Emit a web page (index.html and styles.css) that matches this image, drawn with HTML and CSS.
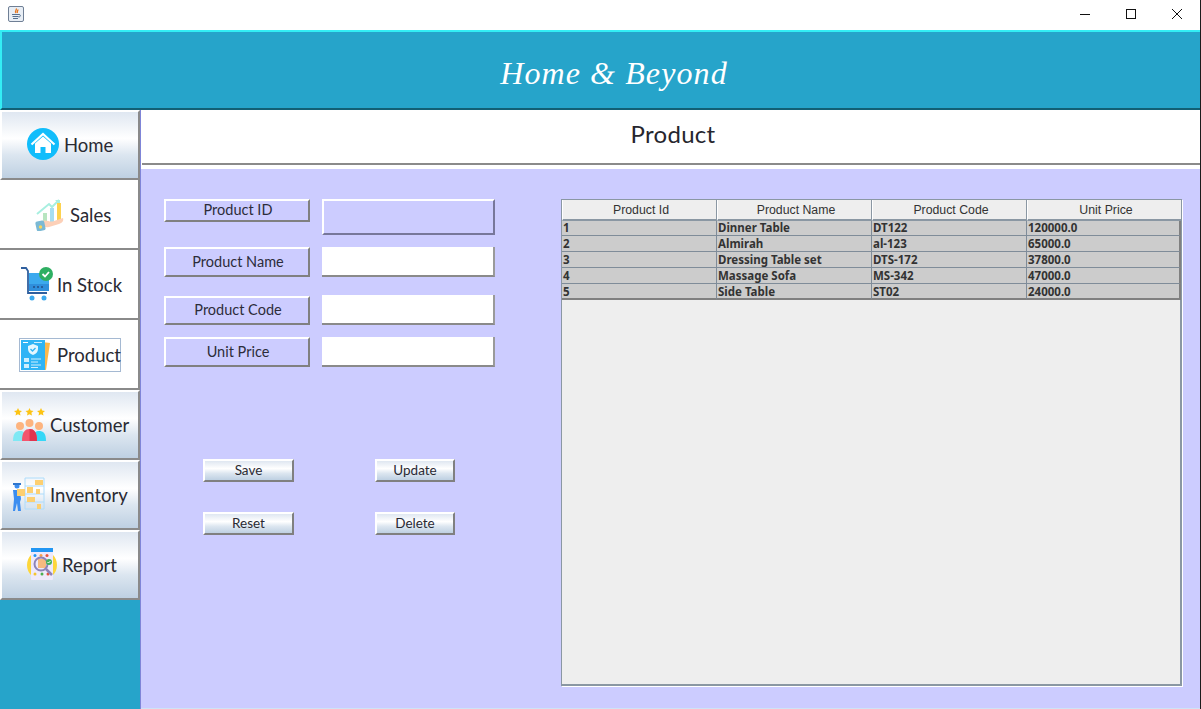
FILE: index.html
```html
<!DOCTYPE html>
<html lang="en">
<head>
<meta charset="utf-8">
<title>Home &amp; Beyond</title>
<link rel="stylesheet" href="styles.css">
</head>
<body>
<div class="window">
  <div class="titlebar">
    <svg class="app-icon" width="16" height="16" viewBox="0 0 16 16"><rect x=".5" y=".5" width="15" height="15" rx="1.5" fill="#e8eef5" stroke="#6f7f95"/><path d="M8 2.500c1.500 1.500-2 3 0 4.500M10 3.500c0 1.500-1.500 2-.5 3.500" fill="none" stroke="#e8741a" stroke-width="1.300"/><path d="M4 8.500h7M4.500 10.500h6M5 12.500h5" stroke="#56708f" stroke-width="1"/><path d="M11 8.500c2 0 2 2.500-.5 2.500" fill="none" stroke="#56708f"/></svg>
    <div class="win-controls">
      <svg width="12" height="12" viewBox="0 0 12 12"><path d="M1 6.500h10" stroke="#111" stroke-width="1"/></svg>
      <svg width="12" height="12" viewBox="0 0 12 12"><rect x="1.500" y="1.500" width="9" height="9" fill="none" stroke="#111"/></svg>
      <svg width="12" height="12" viewBox="0 0 12 12"><path d="M1 1l10 10M11 1L1 11" stroke="#111" stroke-width="1"/></svg>
    </div>
  </div>
  <header class="brand"><h1>Home &amp; Beyond</h1></header>
  <div class="body">
    <nav class="sidebar">
      <button class="nav gradient home"><svg class="ico" width="34" height="34" viewBox="0 0 34 34"><circle cx="17" cy="17" r="16" fill="#11bdfb"/><path d="M5.500 17.500L17 7l11.500 10.500" fill="none" stroke="#fff" stroke-width="2.200"/><path d="M9 16.500L17 9.500l8 7V26h-5.500v-6h-5v6H9z" fill="#fff"/></svg><span>Home</span></button>
      <button class="nav plain sales"><svg class="ico" width="30" height="34" viewBox="0 0 30 34"><path d="M2 17L14 7l3 3 7-7" fill="none" stroke="#a8efe0" stroke-width="2"/><path d="M20 3h5v5z" fill="#a8efe0"/><rect x="8" y="16" width="4" height="9" fill="#b8e5c0"/><rect x="15" y="11" width="4" height="14" fill="#a6def2"/><rect x="22" y="6" width="4" height="18" fill="#fdd24f"/><path d="M7 24c5-2 8 2 12 0l9-3c1 3-1 5-4 6l-10 3c-3 .5-5 0-7-1z" fill="#fcd0b8"/><rect x="1" y="24" width="9" height="10" rx="2" transform="rotate(-12 5 29)" fill="#7bb9d4"/><circle cx="5.500" cy="30" r="1.700" fill="#f8d65c"/></svg><span>Sales</span></button>
      <button class="nav plain stock"><svg class="ico" width="33" height="36" viewBox="0 0 33 36"><path d="M1 2h5l2 3v22h19" fill="none" stroke="#2f5f9e" stroke-width="1.800"/><rect x="9" y="7" width="20" height="18" fill="#3ba9ee"/><rect x="9" y="18" width="20" height="7" fill="#2f8fdc"/><path d="M13 21h2M17 21h2M21 21h2" stroke="#234f86" stroke-width="1.600"/><circle cx="12" cy="32" r="2.500" fill="#3ba9ee"/><circle cx="24" cy="32" r="2.500" fill="#3ba9ee"/><circle cx="26" cy="8" r="7" fill="#2eaf62"/><path d="M22.500 8l2.500 2.500 4-4.500" fill="none" stroke="#fff" stroke-width="1.800"/></svg><span>In Stock</span></button>
      <button class="nav plain product"><span class="focus"><svg class="ico" width="32" height="32" viewBox="0 0 32 32"><path d="M22 3l8 1-4 27-6-1z" fill="#fdb94d"/><rect x="1" y="1" width="24" height="30" fill="#2fb4f5"/><rect x="3" y="3" width="5" height="1" fill="#fff"/><rect x="14" y="3" width="8" height="1" fill="#cfeffd"/><path d="M13 5l5 2v3c0 3-2 5-5 6-3-1-5-3-5-6V7z" fill="#e4f7ff"/><path d="M10.500 10l2 2 3-3" fill="none" stroke="#2fb4f5" stroke-width="1.300"/><rect x="4" y="19" width="5" height="4" fill="#cfeffd"/><rect x="4" y="25" width="5" height="4" fill="#cfeffd"/><path d="M11 20h10M11 23h7M11 26h10M11 28.500h7" stroke="#cfeffd"/></svg><span>Product</span></span></button>
      <button class="nav gradient customer"><svg class="ico" width="33" height="34" viewBox="0 0 33 34"><path d="M5 1l1.200 2.600 2.800.3-2.100 1.900.6 2.800L5 7.200 2.500 8.600l.6-2.800L1 3.900l2.800-.3zM16.500 1l1.200 2.600 2.800.3-2.100 1.900.6 2.800-2.500-1.400L14 8.600l.6-2.800-2.100-1.900 2.800-.3zM28 1l1.200 2.600 2.800.3-2.100 1.900.6 2.800L28 7.200l-2.500 1.400.6-2.800-2.100-1.900 2.800-.3z" fill="#fdc414"/><circle cx="7" cy="19" r="4" fill="#fdb47f"/><circle cx="26" cy="19" r="4" fill="#fdb47f"/><circle cx="16.500" cy="16" r="4" fill="#fdb47f"/><path d="M0 34c0-8 3-10 7-10s6 2 6 10z" fill="#7fe8f4"/><path d="M20 34c0-8 2-10 6-10s7 2 7 10z" fill="#35d7f7"/><path d="M9 34c0-9 3-12 7.500-12S24 25 24 34z" fill="#f4556e"/><path d="M16.500 22c4.500 0 7.500 3 7.500 12h-7.500z" fill="#e2344f"/></svg><span>Customer</span></button>
      <button class="nav gradient inventory"><svg class="ico" width="33" height="34" viewBox="0 0 33 34"><path d="M13 1h19v31H13zM13 9h19M13 17h19M13 25h19" fill="none" stroke="#aedcfb" stroke-width="1"/><rect x="23" y="3" width="8" height="5" fill="#fdcf70"/><rect x="15" y="10" width="6" height="6" fill="#fdcf70"/><rect x="24" y="12" width="4" height="5" fill="#fdcf70"/><rect x="15" y="20" width="8" height="5" fill="#fdcf70"/><rect x="25" y="27" width="4" height="5" fill="#fdcf70"/><circle cx="5" cy="9" r="2.500" fill="#3b8df0"/><path d="M1 6h8v2H1z" fill="#2f75cc"/><path d="M1 13h7l1 9-1 3 1 9H6l-1-8-2 8H1l1-12z" fill="#3b8df0"/><rect x="5" y="12" width="8" height="7" fill="#fdcf70"/></svg><span>Inventory</span></button>
      <button class="nav gradient report"><svg class="ico" width="32" height="34" viewBox="0 0 32 34"><circle cx="16" cy="18" r="15" fill="#fdd63a"/><rect x="5" y="1" width="22" height="32" rx="1" fill="#eee9fb"/><rect x="5" y="1" width="22" height="4" fill="#2196f3"/><circle cx="9" cy="8.500" r="1.500" fill="#2196f3"/><circle cx="15" cy="8.500" r="1.500" fill="#f4a04a"/><circle cx="21" cy="8.500" r="1.500" fill="#e5533d"/><circle cx="9" cy="27" r="1.500" fill="#f4c430"/><circle cx="16" cy="27" r="1.500" fill="#4caf50"/><circle cx="22" cy="27" r="1.500" fill="#e5533d"/><rect x="12" y="12" width="8" height="9" fill="#f7ba80"/><circle cx="15" cy="17" r="6.500" fill="none" stroke="#8d83b8" stroke-width="2"/><path d="M20 22l6 6" stroke="#8d83b8" stroke-width="2.500"/><circle cx="23" cy="15" r="3" fill="#43b05c"/><path d="M21.500 15l1 1 2-2" fill="none" stroke="#fff"/></svg><span>Report</span></button>
    </nav>
    <main class="main">
      <div class="page-title"><h2>Product</h2></div>
      <div class="content">
        <section class="left">
          <div class="form">
            <div class="tag tag-id">Product ID</div>
            <div class="field field-id"></div>
            <div class="tag">Product Name</div>
            <div class="field"></div>
            <div class="tag tag-code">Product Code</div>
            <div class="field field-code"></div>
            <div class="tag">Unit Price</div>
            <div class="field"></div>
          </div>
          <div class="actions">
            <button class="act gradient">Save</button>
            <button class="act gradient">Update</button>
            <button class="act gradient">Reset</button>
            <button class="act gradient">Delete</button>
          </div>
        </section>
        <section class="table-wrap">
          <table>
            <thead>
              <tr><th>Product Id</th><th>Product Name</th><th>Product Code</th><th>Unit Price</th></tr>
            </thead>
            <tbody>
              <tr><td>1</td><td>Dinner Table</td><td>DT122</td><td>120000.0</td></tr>
              <tr><td>2</td><td>Almirah</td><td>al-123</td><td>65000.0</td></tr>
              <tr><td>3</td><td>Dressing Table set</td><td>DTS-172</td><td>37800.0</td></tr>
              <tr><td>4</td><td>Massage Sofa</td><td>MS-342</td><td>47000.0</td></tr>
              <tr><td>5</td><td>Side Table</td><td>ST02</td><td>24000.0</td></tr>
            </tbody>
          </table>
        </section>
      </div>
    </main>
  </div>
</div>
</body>
</html>
```
FILE: styles.css
```css
* { box-sizing: border-box; }
html, body { margin: 0; padding: 0; }
body { width: 1201px; height: 709px; overflow: hidden; background: #fff; font-family: "Lato", "Liberation Sans", sans-serif; }
button { font: inherit; color: inherit; padding: 0; cursor: default; }

.window { width: 1201px; height: 709px; display: flex; flex-direction: column; border-right: 1px solid #1c1c1c; }

.titlebar { height: 30px; flex: none; display: flex; align-items: center; justify-content: space-between; background: #fff; padding: 0 17px 3px 8px; }
.app-icon { display: block; }
.win-controls { display: flex; gap: 34px; align-items: center; }
.win-controls svg { display: block; }

.brand { height: 80px; flex: none; background: #26a4ca; border-top: 2px solid #33eef5; border-left: 2px solid #33eef5; border-bottom: 2px solid #125f74; display: flex; align-items: center; justify-content: center; padding-left: 26px; }
.brand h1 { margin: 6px 0 0; font: italic 400 32px "Liberation Serif", serif; color: #fff; letter-spacing: 1.100px; }

.body { flex: 1; min-height: 0; display: flex; }

.sidebar { width: 141px; flex: none; background: #26a4ca; border-right: 1px solid #7f85d8; display: flex; flex-direction: column; }
.nav { height: 70px; width: 140px; flex: none; display: flex; align-items: center; justify-content: flex-start; font-size: 18.500px; color: #2a2a33; border: none; border-right: 2px solid #8a8a8a; border-bottom: 2px solid #8a8a8a; }
.nav span { display: block; }
.nav > span { margin-top: 2px; }
.ico { display: block; flex: none; }
.gradient { background: linear-gradient(to bottom, #dfe7f1 0%, #ffffff 40%, #dce6f0 65%, #bed0e2 100%); border-top: 2px solid #fff; border-left: 2px solid #fff; }
.nav.gradient { padding-bottom: 2px; }
.plain { background: #fff; }
.home { padding-left: 24px; gap: 4px; }
.sales { padding-left: 35px; gap: 5px; }
.stock { padding-left: 20px; gap: 4px; }
.product { padding-left: 19px; }
.customer { padding-left: 11px; gap: 4px; }
.inventory { padding-left: 10px; gap: 5px; }
.report { padding-left: 24px; gap: 4px; }
.nav > .focus { display: flex; align-items: center; gap: 5px; border: 1px solid #a5b9d2; width: 102px; height: 34px; margin-top: 1px; }

.main { flex: 1; min-width: 0; display: flex; flex-direction: column; }
.page-title { height: 55px; flex: none; margin-left: 1px; border-bottom: 2px solid #8a8a8a; display: flex; align-items: center; justify-content: center; padding-left: 4px; }
.page-title h2 { margin: 0 0 6px; font-size: 24px; font-weight: 400; color: #26262e; letter-spacing: .3px; }

.content { flex: 1; min-height: 0; margin-top: 4px; background: #ccccff; border-bottom: 1px solid #cfe3f5; display: flex; padding: 30px 18px 22px 23px; justify-content: space-between; }
.left { width: 331px; flex: none; }

.form { display: grid; grid-template-columns: 146px 173px; column-gap: 12px; grid-template-rows: 36px 30px 36px 30px; row-gap: 12px; }
.tag { background: #ccccff; border: 2px solid; border-color: #fff #808080 #808080 #fff; display: flex; align-items: center; justify-content: center; font-size: 14.500px; color: #2c2c3a; padding: 0 0 2px 2px; }
.tag-id { height: 23px; }
.tag-code { height: 29px; margin-top: 7px; }
.field { background: #fff; border-right: 2px solid #9a9a9a; border-bottom: 2px solid #8a8a8a; }
.field-id { background: #ccccff; border: 2px solid; border-color: #fff #77779a #77779a #fff; }
.field-code { margin-top: 6px; }

.actions { display: grid; grid-template-columns: 91px 80px; justify-content: start; column-gap: 81px; row-gap: 30px; margin: 92px 0 0 39px; }
.act { height: 23px; font-size: 13.500px; color: #2a2a33; border-right: 2px solid #808080; border-bottom: 2px solid #808080; display: flex; align-items: center; justify-content: center; padding-bottom: 2px; }

.table-wrap { width: 621px; flex: none; background: #eeeeee; border: 1px solid #8a97a3; border-right-width: 2px; border-bottom-width: 2px; box-shadow: 1px 1px 0 #fff; }
table { width: 619px; border-collapse: separate; border-spacing: 0; table-layout: fixed; font-family: "Liberation Sans", sans-serif; font-size: 12.300px; }
th { width: 155px; height: 21px; padding: 1px 0 0 3px; font-weight: 400; text-align: center; color: #333; background: #eeeeee; border-right: 1px solid #8a97a3; border-bottom: 2px solid #8a97a3; border-left: 1px solid #fff; }
th:last-child { width: 154px; border-right: none; }
td { height: 16px; padding: 0 1px; line-height: 13px; font-family: "Noto Sans", "Liberation Sans", sans-serif; font-size: 11.500px; font-weight: 700; color: #333; background: #cccccc; border-right: 1px solid #7f8c99; border-bottom: 1px solid #7f8c99; overflow: hidden; white-space: nowrap; }
tbody tr:first-child td { height: 15px; padding-bottom: 1px; }
td:last-child { border-right: 2px solid #808080; }
tbody tr:last-child td { border-bottom: 2px solid #808080; padding-top: 1px; }
```
